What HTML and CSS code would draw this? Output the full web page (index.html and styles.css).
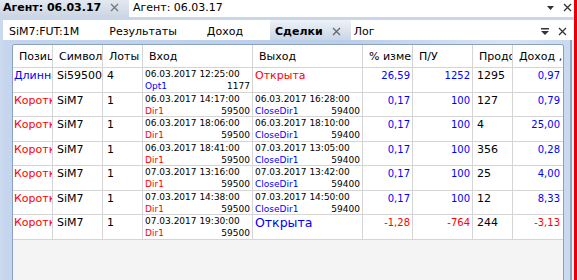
FILE: index.html
```html
<!DOCTYPE html>
<html lang="ru">
<head>
    <meta charset="UTF-8">
    <title>Агент: 06.03.17</title>
    <link rel="stylesheet" href="styles.css">
</head>
<body>
    <div class="window">
        <div class="doc-tabs">
            <div class="doc-tab doc-tab-active">
                <span>Агент: 06.03.17</span>
                <svg class="icon-close" width="9" height="9" viewBox="0 0 9 9"><path d="M1 1L8 8M8 1L1 8"/></svg>
            </div>
            <div class="doc-tab">Агент: 06.03.17</div>
            <div class="doc-tools">
                <svg class="icon-drop" width="7" height="4" viewBox="0 0 7 4"><path d="M0 0H7L3.5 4Z"/></svg>
                <svg class="icon-close" width="9" height="9" viewBox="0 0 9 9"><path d="M1 1L8 8M8 1L1 8"/></svg>
            </div>
        </div>

        <div class="pane">
            <div class="pane-tabs">
                <div class="pane-tab pane-tab-first">SiM7:FUT:1M</div>
                <div class="pane-tab">Результаты</div>
                <div class="pane-tab">Доход</div>
                <div class="pane-tab pane-tab-active">
                    <span>Сделки</span>
                    <svg class="icon-close" width="9" height="9" viewBox="0 0 9 9"><path d="M1 1L8 8M8 1L1 8"/></svg>
                </div>
                <div class="pane-tab pane-tab-last">Лог</div>
                <div class="pane-tools">
                    <svg class="icon-menu" width="8" height="7" viewBox="0 0 8 7"><rect x="0" y="0" width="8" height="1.5"/><path d="M0 3H8L4 7Z"/></svg>
                    <svg class="icon-close" width="9" height="9" viewBox="0 0 9 9"><path d="M1 1L8 8M8 1L1 8"/></svg>
                </div>
            </div>

            <div class="pane-body">
                <div class="grid">
                    <div class="grid-row grid-head">
                        <div class="cell">Позиция</div>
                        <div class="cell">Символ</div>
                        <div class="cell">Лоты</div>
                        <div class="cell">Вход</div>
                        <div class="cell">Выход</div>
                        <div class="cell">% изменения</div>
                        <div class="cell">П/У</div>
                        <div class="cell">Продолжительность</div>
                        <div class="cell">Доход , %</div>
                    </div>

                    <div class="grid-row">
                        <div class="cell side long">Длинная</div>
                        <div class="cell">Si59500</div>
                        <div class="cell">4</div>
                        <div class="cell trade">
                            <div>06.03.2017 12:25:00</div>
                            <div class="trade-foot"><span class="long">Opt1</span><span>1177</span></div>
                        </div>
                        <div class="cell trade-open short">Открыта</div>
                        <div class="cell num long">26,59</div>
                        <div class="cell num long">1252</div>
                        <div class="cell">1295</div>
                        <div class="cell num num-last long">0,97</div>
                    </div>

                    <div class="grid-row">
                        <div class="cell side short">Короткая</div>
                        <div class="cell">SiM7</div>
                        <div class="cell">1</div>
                        <div class="cell trade">
                            <div>06.03.2017 14:17:00</div>
                            <div class="trade-foot"><span class="short">Dir1</span><span>59500</span></div>
                        </div>
                        <div class="cell trade">
                            <div>06.03.2017 16:28:00</div>
                            <div class="trade-foot"><span class="long">CloseDir1</span><span>59400</span></div>
                        </div>
                        <div class="cell num long">0,17</div>
                        <div class="cell num long">100</div>
                        <div class="cell">127</div>
                        <div class="cell num num-last long">0,79</div>
                    </div>

                    <div class="grid-row">
                        <div class="cell side short">Короткая</div>
                        <div class="cell">SiM7</div>
                        <div class="cell">1</div>
                        <div class="cell trade">
                            <div>06.03.2017 18:06:00</div>
                            <div class="trade-foot"><span class="short">Dir1</span><span>59500</span></div>
                        </div>
                        <div class="cell trade">
                            <div>06.03.2017 18:10:00</div>
                            <div class="trade-foot"><span class="long">CloseDir1</span><span>59400</span></div>
                        </div>
                        <div class="cell num long">0,17</div>
                        <div class="cell num long">100</div>
                        <div class="cell">4</div>
                        <div class="cell num num-last long">25,00</div>
                    </div>

                    <div class="grid-row">
                        <div class="cell side short">Короткая</div>
                        <div class="cell">SiM7</div>
                        <div class="cell">1</div>
                        <div class="cell trade">
                            <div>06.03.2017 18:41:00</div>
                            <div class="trade-foot"><span class="short">Dir1</span><span>59500</span></div>
                        </div>
                        <div class="cell trade">
                            <div>07.03.2017 13:05:00</div>
                            <div class="trade-foot"><span class="long">CloseDir1</span><span>59400</span></div>
                        </div>
                        <div class="cell num long">0,17</div>
                        <div class="cell num long">100</div>
                        <div class="cell">356</div>
                        <div class="cell num num-last long">0,28</div>
                    </div>

                    <div class="grid-row">
                        <div class="cell side short">Короткая</div>
                        <div class="cell">SiM7</div>
                        <div class="cell">1</div>
                        <div class="cell trade">
                            <div>07.03.2017 13:16:00</div>
                            <div class="trade-foot"><span class="short">Dir1</span><span>59500</span></div>
                        </div>
                        <div class="cell trade">
                            <div>07.03.2017 13:42:00</div>
                            <div class="trade-foot"><span class="long">CloseDir1</span><span>59400</span></div>
                        </div>
                        <div class="cell num long">0,17</div>
                        <div class="cell num long">100</div>
                        <div class="cell">25</div>
                        <div class="cell num num-last long">4,00</div>
                    </div>

                    <div class="grid-row">
                        <div class="cell side short">Короткая</div>
                        <div class="cell">SiM7</div>
                        <div class="cell">1</div>
                        <div class="cell trade">
                            <div>07.03.2017 14:38:00</div>
                            <div class="trade-foot"><span class="short">Dir1</span><span>59500</span></div>
                        </div>
                        <div class="cell trade">
                            <div>07.03.2017 14:50:00</div>
                            <div class="trade-foot"><span class="long">CloseDir1</span><span>59400</span></div>
                        </div>
                        <div class="cell num long">0,17</div>
                        <div class="cell num long">100</div>
                        <div class="cell">12</div>
                        <div class="cell num num-last long">8,33</div>
                    </div>

                    <div class="grid-row">
                        <div class="cell side short">Короткая</div>
                        <div class="cell">SiM7</div>
                        <div class="cell">1</div>
                        <div class="cell trade">
                            <div>07.03.2017 19:30:00</div>
                            <div class="trade-foot"><span class="short">Dir1</span><span>59500</span></div>
                        </div>
                        <div class="cell trade-open trade-open-wide long">Открыта</div>
                        <div class="cell num short">-1,28</div>
                        <div class="cell num short">-764</div>
                        <div class="cell">244</div>
                        <div class="cell num num-last short">-3,13</div>
                    </div>
                </div>
            </div>
        </div>
    </div>
</body>
</html>
```

FILE: styles.css
```css
body {
    margin: 0;
    background: #fff;
    font-family: "DejaVu Sans", Verdana, sans-serif;
    font-size: 11px;
    color: #000;
}

.window {
    width: 574px;
    height: 280px;
    border-right: 3px solid #e5000a;
    display: flex;
    flex-direction: column;
    overflow: hidden;
}

/* верхние вкладки документа */
.doc-tabs {
    height: 17px;
    display: flex;
    flex-shrink: 0;
}

.doc-tab {
    display: flex;
    align-items: center;
    padding: 0 0 2px 4px;
    line-height: 14px;
    white-space: nowrap;
}

.doc-tab-active {
    width: 129px;
    box-sizing: border-box;
    padding-left: 3px;
    padding-right: 10px;
    font-weight: bold;
    background: linear-gradient(#e3e9f1, #cbd5e3);
}

.doc-tab-active .icon-close {
    margin-left: auto;
    stroke: #777;
}

.doc-tools {
    margin-left: auto;
    display: flex;
    align-items: center;
    gap: 9px;
    padding: 0 2px 2px 0;
}

.icon-close {
    fill: none;
    stroke: #333;
    stroke-width: 1.3;
}

.icon-drop,
.icon-menu {
    fill: #333;
}

/* панель */
.pane {
    flex: 1;
    display: flex;
    flex-direction: column;
    border-top: 3px solid #c8d6ea;
    border-left: 3px solid #cad9ee;
    min-height: 0;
}

.pane-tabs {
    height: 20px;
    flex-shrink: 0;
    display: flex;
    background: #fff;
}

.pane-tab {
    display: flex;
    align-items: center;
    padding: 2px 15px 0;
    white-space: nowrap;
}

.pane-tab-first {
    padding-left: 6px;
}

.pane-tab-active {
    margin-left: 12px;
    padding: 2px 10px 0 5px;
    gap: 9px;
    font-weight: bold;
    border-radius: 2px 2px 0 0;
    background: linear-gradient(#eef2f7, #c9d6e7);
}

.pane-tab-active .icon-close {
    stroke: #666;
}

.pane-tab-last {
    padding-left: 3px;
}

.pane-tools {
    margin-left: auto;
    display: flex;
    align-items: center;
    gap: 9px;
    padding: 2px 7px 0 0;
}

.pane-body {
    flex: 1;
    display: flex;
    min-height: 0;
    padding: 4px 10px 0 9px;
    background:
        linear-gradient(to left, #e9eff7 0 2px, #8ea4c1 2px 4px, transparent 4px),
        linear-gradient(to right, #c4d5ed, #bacde9 60%, #d8e4f4 88%, #c8d8ee);
}

/* таблица сделок */
.grid {
    flex: 1;
    border: 1px solid #8aa0bf;
    border-bottom: 0;
    border-radius: 3px 3px 0 0;
    background: #f4f4f4;
    overflow: hidden;
}

.grid-row {
    display: grid;
    grid-template-columns: 40px 50px 40px 110px 110px 50px 60px 40px 50px;
    height: 24.5px;
    box-sizing: border-box;
    border-bottom: 1px solid #d5d5d5;
    background: #fff;
}

.grid-head {
    height: 23px;
}

.grid-head .cell {
    padding: 5px 0 0 6px;
}

.cell {
    border-right: 1px solid #d5d5d5;
    overflow: hidden;
    white-space: nowrap;
    padding: 1px 0 0 4px;
    line-height: 14px;
}

.cell:last-child {
    border-right: 0;
}

.side {
    padding-left: 1px;
}

.trade {
    padding: 0 2px;
    font-size: 9px;
    line-height: 12px;
}

.trade-foot {
    display: flex;
    justify-content: space-between;
}

.trade-open {
    padding-left: 2px;
}

.trade-open-wide {
    font-size: 12.5px;
}

.num {
    padding: 1px 2px 0 0;
    text-align: right;
    font-size: 10px;
}

.num-last {
    padding-right: 3px;
}

.long {
    color: #0000ff;
}

.short {
    color: #ff0000;
}
```
